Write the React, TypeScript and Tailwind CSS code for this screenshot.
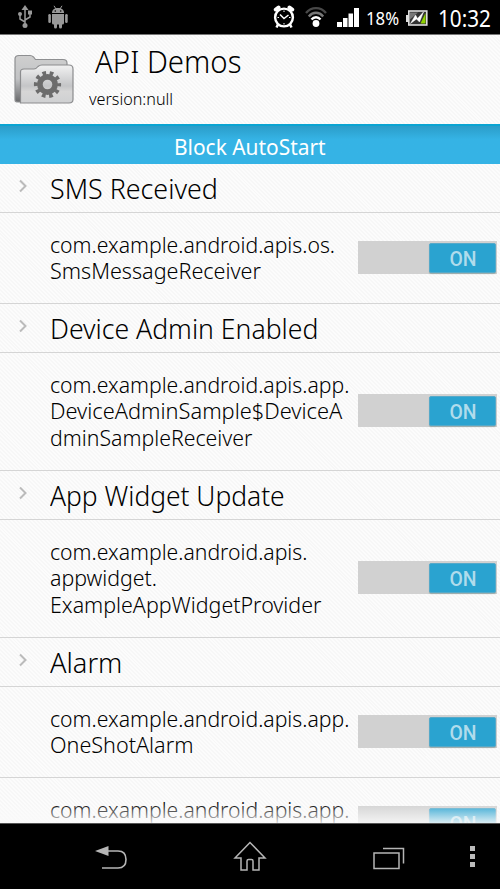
import React from "react";

type Line = { text: string; scale: string };
type Entry = { title?: string; titleScale?: string; lines: Line[]; height: string };

const entries: Entry[] = [
  {
    title: "SMS Received",
    titleScale: "scale-x-[0.958]",
    height: "h-[91px]",
    lines: [
      { text: "com.example.android.apis.os.", scale: "scale-x-[0.963]" },
      { text: "SmsMessageReceiver", scale: "scale-x-[0.98]" },
    ],
  },
  {
    title: "Device Admin Enabled",
    titleScale: "scale-x-[0.95]",
    height: "h-[118px]",
    lines: [
      { text: "com.example.android.apis.app.", scale: "scale-x-[0.963]" },
      { text: "DeviceAdminSample$DeviceA", scale: "scale-x-[0.99]" },
      { text: "dminSampleReceiver", scale: "scale-x-[0.967]" },
    ],
  },
  {
    title: "App Widget Update",
    titleScale: "scale-x-[0.942]",
    height: "h-[118px]",
    lines: [
      { text: "com.example.android.apis.", scale: "scale-x-[0.963]" },
      { text: "appwidget.", scale: "scale-x-[0.97]" },
      { text: "ExampleAppWidgetProvider", scale: "scale-x-[0.973]" },
    ],
  },
  {
    title: "Alarm",
    titleScale: "scale-x-[0.97]",
    height: "h-[91px]",
    lines: [
      { text: "com.example.android.apis.app.", scale: "scale-x-[0.963]" },
      { text: "OneShotAlarm", scale: "scale-x-[0.98]" },
    ],
  },
  {
    height: "h-[91px]",
    lines: [
      { text: "com.example.android.apis.app.", scale: "scale-x-[0.963]" },
      { text: "OneShotAlarm", scale: "scale-x-[0.98]" },
    ],
  },
];

function StatusBar() {
  return (
    <div className="flex h-[35px] shrink-0 items-center border-b border-[#777] bg-black text-white">
      <svg className="ml-[17px] h-[24px] w-[16px]" viewBox="0 0 16 24" fill="none" stroke="#999" strokeWidth="1.5">
        <path d="M8 20V3M8 17L3 14V9M8 15L13 12V8" />
        <path d="M8 0L11.500 5H4.500Z" fill="#999" stroke="none" />
        <circle cx="8" cy="20.500" r="2.500" fill="#999" stroke="none" />
        <circle cx="3" cy="9" r="2" fill="#999" stroke="none" />
        <path d="M11 5.500h4v4h-4z" fill="#999" stroke="none" />
      </svg>
      <svg className="ml-[15px] h-[24px] w-[20px]" viewBox="0 0 20 24" fill="#999">
        <path d="M4 8C4 4.800 6.300 3 10 3s6 1.800 6 5z" />
        <path d="M6 .8L8 4M14 .8L12 4" stroke="#999" strokeWidth="1" />
        <path d="M4 9h12v9a1.500 1.500 0 0 1-1.500 1.500H14V22a1.500 1.500 0 0 1-3 0v-2.500H9V22a1.500 1.500 0 0 1-3 0v-2.500H5.500A1.500 1.500 0 0 1 4 18z" />
        <rect x="0.300" y="9" width="2.600" height="9" rx="1.300" />
        <rect x="17.100" y="9" width="2.600" height="9" rx="1.300" />
        <circle cx="7.300" cy="6" r=".8" fill="#000" />
        <circle cx="12.700" cy="6" r=".8" fill="#000" />
      </svg>
      <svg className="ml-[205px] h-[24px] w-[22px]" viewBox="0 0 22 24" fill="none" stroke="#fff">
        <circle cx="11" cy="12.500" r="8.900" strokeWidth="2.400" />
        <path d="M2.800 4.500L5.500 2.500M19.200 4.500L16.500 2.500" strokeWidth="4" strokeLinecap="round" />
        <path d="M5 19.500L3.500 22.500M17 19.500l1.500 3" strokeWidth="2.500" />
        <path d="M7 9.500l4 4 4.500-3.500" strokeWidth="1.500" />
        <path d="M11 5.500V7M11 18v1.500M4.500 12.500H6M16 12.500h1.500" strokeWidth="1" />
      </svg>
      <svg className="ml-[10px] h-[24px] w-[22px]" viewBox="0 0 22 24" fill="none" strokeWidth="2.400">
        <path d="M1 8C6.500 1.500 15.500 1.500 21 8" stroke="#484848" />
        <path d="M3.800 11.500C8 6.500 14 6.500 18.200 11.500" stroke="#777" />
        <path d="M6.500 14.500C9 11.500 13 11.500 15.500 14.500" stroke="#fff" />
        <circle cx="11" cy="18.500" r="3.400" fill="#fff" />
      </svg>
      <svg className="ml-[10px] h-[20px] w-[22px]" viewBox="0 0 22 20" fill="#fff">
        <path d="M0 15h5v5H0zM6 11h4.500v9H6zM11.500 6.500H16V20h-4.500zM17 1h5v19h-5z" />
      </svg>
      <span className="ml-[7px] w-[40px] whitespace-nowrap pt-px text-[18px] leading-[34px]">
        <span className="inline-block origin-left scale-x-[0.93] font-normal">18%</span>
      </span>
      <svg className="mt-[2px] h-[18px] w-[22px]" viewBox="0 0 22 18">
        <path d="M0 6h2v7H0z" fill="#ddd" />
        <rect x="2.800" y="2" width="18" height="14" fill="#333" stroke="#ddd" strokeWidth="1.600" />
        <path d="M14.500 14.500L19.500 4v10.500z" fill="#8fd400" />
        <path d="M4 3.500h8l-8 7z" fill="#777" />
        <path d="M4.500 14.500L9.500 6l2 3.500L17.500 3 13.500 13l-3-3z" fill="#fff" stroke="#fff" strokeWidth=".5" />
      </svg>
      <span className="ml-[10px] whitespace-nowrap pt-px text-[23px] leading-[34px]">
        <span className="inline-block origin-left scale-x-[0.9] font-normal">10:32</span>
      </span>
    </div>
  );
}

function FolderIcon() {
  return (
    <svg className="h-[52px] w-[62px]" viewBox="0 0 62 52">
      <defs>
        <linearGradient id="back" x1="0" y1="0" x2="0" y2="1">
          <stop offset="0" stopColor="#cfcfcf" />
          <stop offset=".5" stopColor="#c2c3c5" />
          <stop offset="1" stopColor="#68696b" />
        </linearGradient>
        <linearGradient id="front" x1="0" y1="0" x2="0" y2="1">
          <stop offset="0" stopColor="#f2f2f2" />
          <stop offset=".55" stopColor="#c4c5c7" />
          <stop offset=".7" stopColor="#d6d6d6" />
          <stop offset="1" stopColor="#cfd0d2" />
        </linearGradient>
        <linearGradient id="gear" x1="0" y1="0" x2="0" y2="1">
          <stop offset="0" stopColor="#8f8f8f" />
          <stop offset="1" stopColor="#4c4c4c" />
        </linearGradient>
      </defs>
      <path d="M2 47V6Q2 2.500 6 2.500H17Q19 2.500 20.500 4L22.500 6.500H50Q54 6.500 54 10V49H5Q2 49 2 47Z" fill="url(#back)" stroke="#8e8f91" strokeWidth="1.200" />
      <path d="M7.500 50V19Q7.500 16 11 16H21Q23 16 25 13.500Q26.500 12 29 12H56Q60 12 60 16V46.500Q60 50 56 50H7.500Z" fill="url(#front)" stroke="#8b8c8e" strokeWidth="1.200" />
      <g stroke="url(#gear)" fill="none" transform="translate(34.500 31.500)">
        <circle r="7.600" strokeWidth="5.600" stroke="#6c6c6c" />
        <circle r="11.600" strokeWidth="4" stroke="#6c6c6c" strokeDasharray="3.650 3.640" strokeDashoffset="1.800" />
      </g>
    </svg>
  );
}

function Toggle() {
  return (
    <div className="flex h-[33px] w-[139px] shrink-0 justify-end bg-[#d1d1d1] pt-[2px] pr-px">
      <div className="flex h-[30px] w-[67px] items-center justify-center rounded-[2px] border border-[#55a9c9] bg-[#2aa3d0] font-['Roboto'] text-[20px] font-medium text-[#b0dcec] shadow-[0_1px_1px_#9aa]">
        <span className="scale-x-[0.97] pt-[2px]">ON</span>
      </div>
    </div>
  );
}

function NavBar() {
  return (
    <div className="flex h-[66px] shrink-0 items-center border-t border-[#555] bg-black">
      <svg className="mt-[3px] ml-[95px] h-[26px] w-[33px]" viewBox="0 0 33 26" fill="none" stroke="#b5b5b5" strokeWidth="1.600">
        <path d="M13 6H23Q31 6 31 14.500Q31 23 23 23H7" />
        <path d="M0 6L13.500 1V11Z" fill="#b5b5b5" stroke="none" />
      </svg>
      <svg className="ml-[105px] h-[32px] w-[34px]" viewBox="0 0 34 32" fill="none" stroke="#b5b5b5" strokeWidth="1.500">
        <path d="M17 1.500L2 17H8V29H14V20Q14 18.500 15.500 18.500H18.500Q20 18.500 20 20V29H26V17H32Z" />
      </svg>
      <svg className="mt-[2px] ml-[105px] h-[24px] w-[34px]" viewBox="0 0 34 24" fill="none" stroke="#b5b5b5" strokeWidth="1.500">
        <path d="M2 7H27V22.500H2zM11 2.500H31.500V17.500" />
      </svg>
      <div className="ml-[64px] flex flex-col gap-[3px]">
        <i className="block h-[5px] w-[5px] bg-[#bbb]" />
        <i className="block h-[5px] w-[5px] bg-[#bbb]" />
        <i className="block h-[5px] w-[5px] bg-[#bbb]" />
      </div>
    </div>
  );
}

export default function App() {
  return (
    <div className="flex h-[889px] w-[500px] flex-col overflow-hidden bg-black font-['Noto_Sans',sans-serif] font-[350]">
      <StatusBar />
      <main className="relative min-h-0 flex-1 overflow-hidden bg-[#fafafa] bg-[repeating-linear-gradient(45deg,#fcfcfc_0px,#fcfcfc_1.4px,#f7f7f7_1.4px,#f7f7f7_2.8px)] text-black">
        <header className="flex h-[89px] pt-[18px] pl-[13px]">
          <FolderIcon />
          <div className="flex flex-col whitespace-nowrap pl-[14px]">
            <h1 className="-mt-[14px] ml-[6px] h-[47px] origin-left scale-x-[0.948] text-[31px] leading-[44px]">API Demos</h1>
            <p className="origin-left scale-x-[0.95] text-[17px] leading-[26px]">version:null</p>
          </div>
        </header>
        <div className="flex h-[40px] justify-center border-t-2 border-[#0aa4d2] bg-linear-to-b from-[#2b9dc9] to-[#35b3e5] to-35% text-[22px] leading-[41px] font-normal text-white">
          <span className="inline-block scale-x-[0.95]">Block AutoStart</span>
        </div>
        {entries.map((entry, index) => (
          <section key={index}>
            {entry.title && (
              <div className="flex h-[49px] items-center border-b border-[#d5d5d5]">
                <svg className="mb-[5px] ml-[18px] h-[14px] w-[10px]" viewBox="0 0 10 14" fill="none" stroke="#bbb" strokeWidth="2">
                  <path d="M2 1.500L7.500 7L2 12.500" />
                </svg>
                <h2 className={`ml-[22px] origin-left whitespace-nowrap text-[28px] leading-[48px] ${entry.titleScale}`}>{entry.title}</h2>
              </div>
            )}
            <div className={`flex items-center justify-between border-b border-[#d5d5d5] pr-[3px] pb-[2px] pl-[50px] ${entry.height}`}>
              <div className="w-[300px] whitespace-nowrap text-[22px] leading-[26.500px]">
                {entry.lines.map((line) => (
                  <div key={line.text} className={`origin-left ${line.scale}`}>{line.text}</div>
                ))}
              </div>
              <Toggle />
            </div>
          </section>
        ))}
        <div className="absolute inset-x-0 bottom-0 h-[20px] bg-linear-to-b from-[#fafafa]/0 to-[#fafafa]/85" />
      </main>
      <NavBar />
    </div>
  );
}
